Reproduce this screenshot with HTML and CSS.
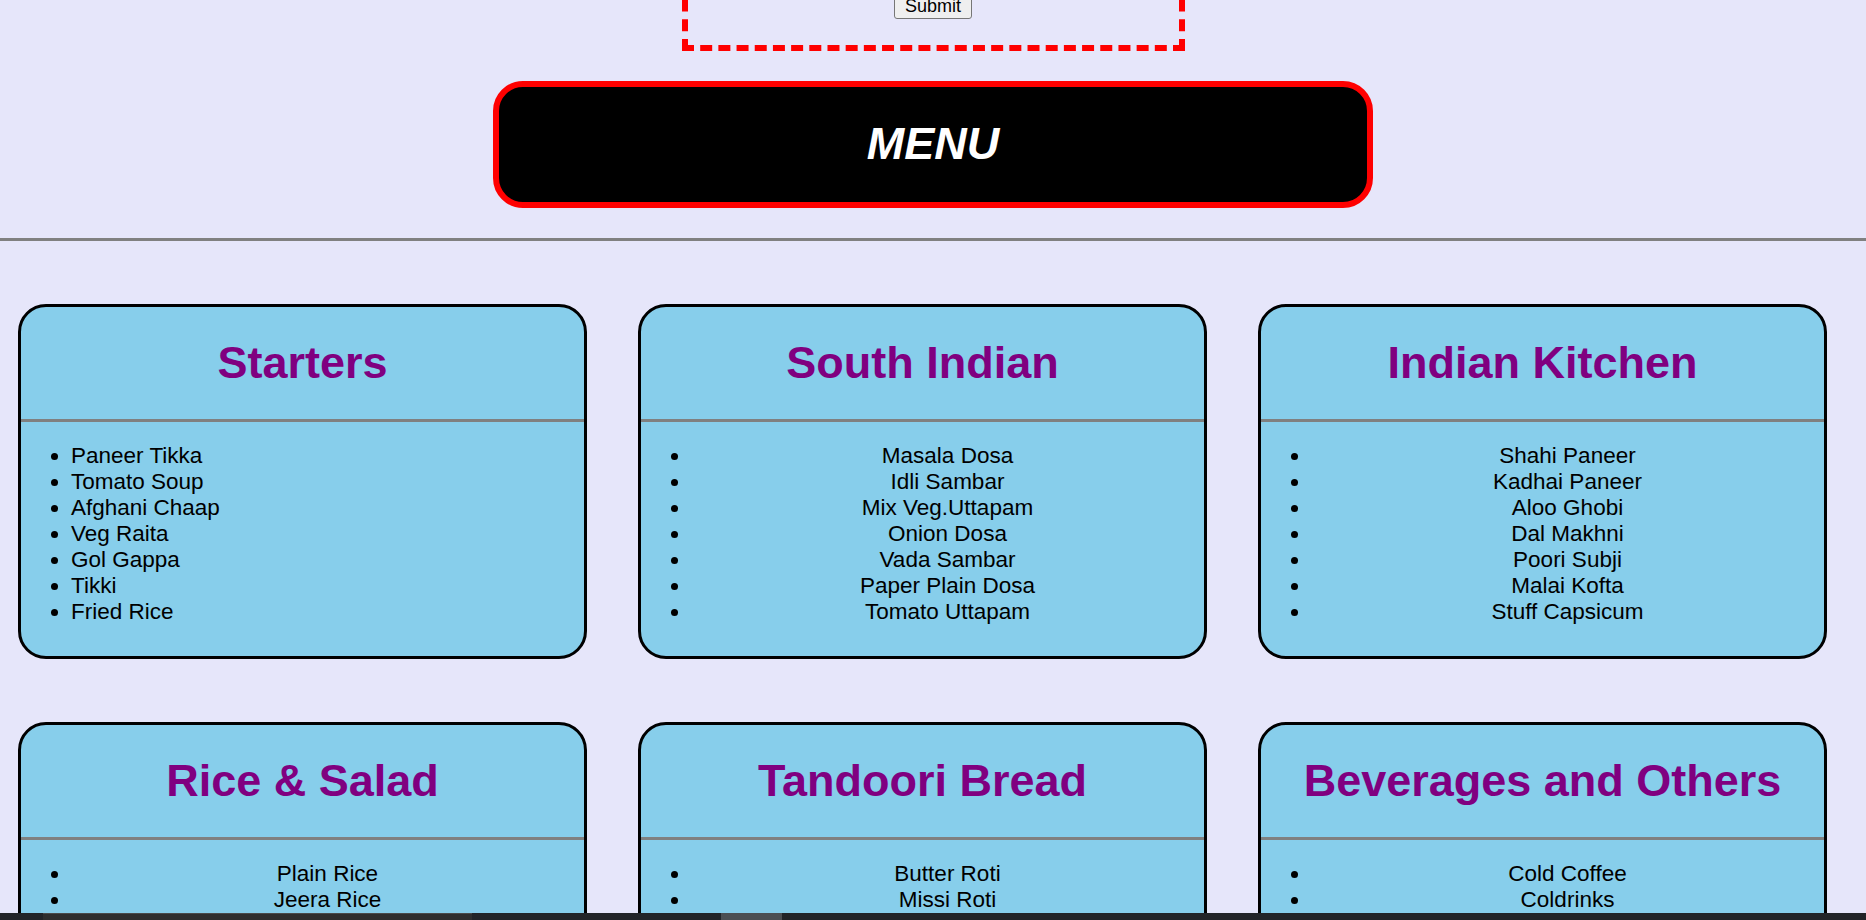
FILE: index.html
```html
<!DOCTYPE html>
<html lang="en">
<head>
<meta charset="utf-8">
<title>Restaurant Menu</title>
<link rel="stylesheet" href="styles.css">
</head>
<body>
  <form class="order-form">
    <button type="submit" class="submit-btn">Submit</button>
  </form>

  <div class="menu-banner">
    <h1 class="menu-title">MENU</h1>
  </div>

  <hr class="page-rule">

  <main class="card-grid">
    <section class="card">
      <h2 class="card-title">Starters</h2>
      <ul class="card-list list-left">
        <li>Paneer Tikka</li>
        <li>Tomato Soup</li>
        <li>Afghani Chaap</li>
        <li>Veg Raita</li>
        <li>Gol Gappa</li>
        <li>Tikki</li>
        <li>Fried Rice</li>
      </ul>
    </section>

    <section class="card">
      <h2 class="card-title">South Indian</h2>
      <ul class="card-list">
        <li>Masala Dosa</li>
        <li>Idli Sambar</li>
        <li>Mix Veg.Uttapam</li>
        <li>Onion Dosa</li>
        <li>Vada Sambar</li>
        <li>Paper Plain Dosa</li>
        <li>Tomato Uttapam</li>
      </ul>
    </section>

    <section class="card">
      <h2 class="card-title">Indian Kitchen</h2>
      <ul class="card-list">
        <li>Shahi Paneer</li>
        <li>Kadhai Paneer</li>
        <li>Aloo Ghobi</li>
        <li>Dal Makhni</li>
        <li>Poori Subji</li>
        <li>Malai Kofta</li>
        <li>Stuff Capsicum</li>
      </ul>
    </section>

    <section class="card">
      <h2 class="card-title">Rice &amp; Salad</h2>
      <ul class="card-list">
        <li>Plain Rice</li>
        <li>Jeera Rice</li>
        <li>Veg Pulao</li>
        <li>Dal Rice</li>
        <li>Green Salad</li>
        <li>Kachumber Salad</li>
        <li>Boondi Raita</li>
      </ul>
    </section>

    <section class="card">
      <h2 class="card-title">Tandoori Bread</h2>
      <ul class="card-list">
        <li>Butter Roti</li>
        <li>Missi Roti</li>
        <li>Tandoori Roti</li>
        <li>Butter Naan</li>
        <li>Garlic Naan</li>
        <li>Lachha Paratha</li>
        <li>Stuffed Kulcha</li>
      </ul>
    </section>

    <section class="card">
      <h2 class="card-title">Beverages and Others</h2>
      <ul class="card-list">
        <li>Cold Coffee</li>
        <li>Coldrinks</li>
        <li>Sweet Lassi</li>
        <li>Masala Chaas</li>
        <li>Masala Tea</li>
        <li>Hot Coffee</li>
        <li>Ice Cream</li>
      </ul>
    </section>
  </main>

  <div class="bottom-bar">
    <span class="bar-track"></span>
    <span class="bar-thumb"></span>
  </div>
</body>
</html>
```

FILE: styles.css
```css
html {
  overflow: hidden;
}

body {
  margin: 0;
  background: #e6e6fa;
  font-family: "Liberation Sans", Arial, sans-serif;
  color: #000;
}

/* ---------- order form (scrolled partly out of view) ---------- */
.order-form {
  box-sizing: border-box;
  width: 503px;
  margin: -40px auto 0;
  padding: 28px 0 26px;
  border: 6px dashed #ff0000;
  display: flex;
  justify-content: center;
}

.submit-btn {
  font-family: "Liberation Sans", Arial, sans-serif;
  font-size: 18px;
  line-height: 21px;
  padding: 1px 10px;
  border: 1px solid #767676;
  border-radius: 3px;
  background: #efefef;
  color: #000;
}

/* ---------- MENU banner ---------- */
.menu-banner {
  box-sizing: border-box;
  width: 880px;
  margin: 30px auto 0;
  border: 6px solid #ff0000;
  border-radius: 30px;
  background: #000;
  padding: 31px 0 32px;
}

.menu-title {
  margin: 0;
  text-align: center;
  color: #fff;
  font-size: 45px;
  line-height: 52px;
  font-weight: bold;
  font-style: italic;
}

.page-rule {
  margin: 30px 0 0;
  border: 0;
  height: 3px;
  background: #808080;
}

/* ---------- cards ---------- */
.card-grid {
  display: grid;
  grid-template-columns: repeat(3, 569px);
  column-gap: 51px;
  row-gap: 63px;
  padding: 63px 0 60px 18px;
}

.card {
  border: 3px solid #000;
  border-radius: 28px;
  background: #87ceeb;
  overflow: hidden;
}

.card-title {
  margin: 0;
  padding: 30px 0 31px;
  border-bottom: 3px solid #808080;
  text-align: center;
  color: #800080;
  font-size: 45px;
  line-height: 51px;
  font-weight: bold;
}

.card-list {
  margin: 21px 0 31px;
  padding: 0 0 0 50px;
  font-size: 22.5px;
  line-height: 26px;
  text-align: center;
}

.card-list.list-left {
  text-align: left;
}

/* ---------- dark strip at the bottom edge ---------- */
.bottom-bar {
  position: fixed;
  left: 0;
  right: 0;
  bottom: 0;
  height: 7px;
  background: #222428;
  display: flex;
}

.bar-track {
  margin-left: 43px;
  width: 429px;
  background: #2e2e2e;
  border-top: 1px solid #4a4a4a;
}

.bar-thumb {
  margin-left: 249px;
  width: 61px;
  background: #4b4e52;
}
```
